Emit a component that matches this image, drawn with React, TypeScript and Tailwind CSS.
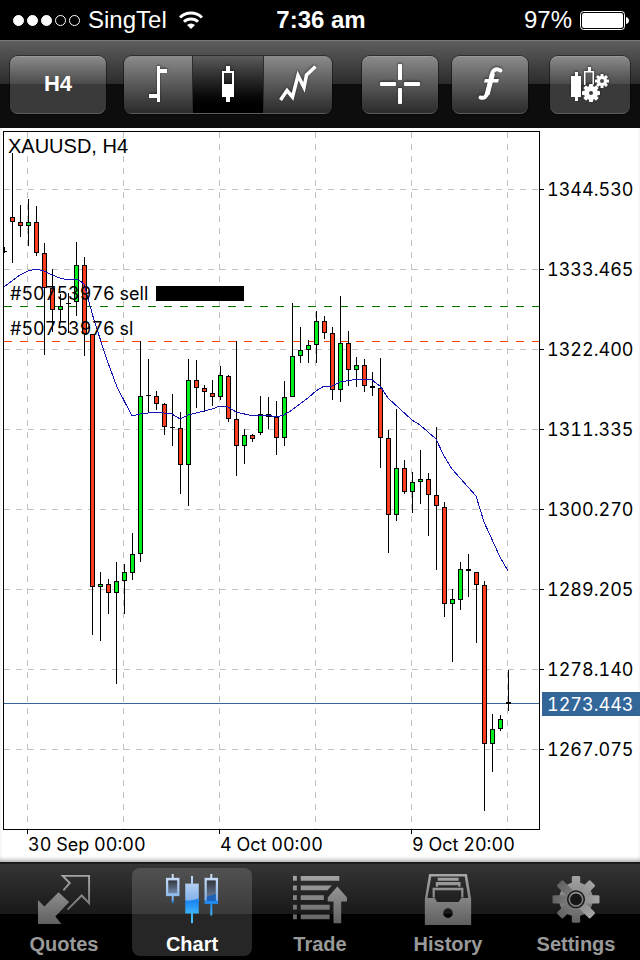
import { useState } from 'react';
import type { ReactNode } from 'react';
import clsx from 'clsx';

// x, high, body top, body bottom, low, direction (u = up, d = down, n = doji)
type Candle = [number, number, number, number, number, 'u' | 'd' | 'n'];

const candles: Candle[] = [
  [12, 153, 217, 222, 263, 'd'],
  [20, 205, 222, 226, 237, 'd'],
  [28, 199, 222, 226, 246, 'u'],
  [36, 206, 222, 253, 256, 'd'],
  [44, 243, 253, 288, 355, 'd'],
  [52, 269, 288, 310, 332, 'd'],
  [60, 294, 306, 310, 322, 'u'],
  [68, 293, 303, 304, 333, 'n'],
  [76, 242, 265, 302, 316, 'u'],
  [84, 257, 265, 334, 356, 'd'],
  [92, 334, 334, 587, 635, 'd'],
  [100, 572, 584, 587, 641, 'u'],
  [108, 579, 584, 593, 614, 'd'],
  [116, 562, 581, 593, 684, 'u'],
  [124, 564, 572, 581, 614, 'u'],
  [132, 533, 554, 573, 580, 'u'],
  [140, 341, 396, 554, 562, 'u'],
  [148, 359, 395, 396, 412, 'n'],
  [156, 391, 396, 404, 410, 'd'],
  [164, 403, 404, 427, 435, 'd'],
  [172, 394, 427, 428, 446, 'n'],
  [180, 412, 428, 465, 494, 'd'],
  [188, 359, 380, 465, 506, 'u'],
  [196, 360, 380, 388, 408, 'd'],
  [204, 385, 388, 392, 412, 'd'],
  [212, 380, 393, 397, 406, 'd'],
  [220, 366, 375, 397, 400, 'u'],
  [228, 375, 376, 419, 422, 'd'],
  [236, 341, 419, 446, 476, 'd'],
  [244, 429, 435, 446, 464, 'u'],
  [252, 434, 435, 439, 442, 'd'],
  [260, 396, 414, 433, 435, 'u'],
  [268, 397, 414, 417, 429, 'n'],
  [276, 401, 417, 438, 455, 'd'],
  [284, 381, 397, 438, 446, 'u'],
  [292, 303, 356, 397, 397, 'u'],
  [300, 327, 350, 356, 363, 'u'],
  [308, 340, 345, 350, 363, 'u'],
  [316, 311, 321, 345, 363, 'u'],
  [324, 316, 321, 333, 339, 'd'],
  [332, 327, 333, 390, 400, 'd'],
  [340, 296, 343, 390, 402, 'u'],
  [348, 331, 343, 370, 386, 'd'],
  [356, 357, 365, 370, 387, 'u'],
  [364, 359, 365, 386, 392, 'd'],
  [372, 372, 386, 388, 396, 'n'],
  [380, 358, 388, 438, 468, 'd'],
  [388, 430, 438, 515, 553, 'd'],
  [396, 409, 468, 515, 521, 'u'],
  [404, 460, 468, 492, 494, 'd'],
  [412, 472, 482, 492, 513, 'u'],
  [420, 450, 479, 482, 504, 'u'],
  [428, 473, 479, 495, 536, 'd'],
  [436, 427, 495, 506, 570, 'd'],
  [444, 502, 507, 604, 617, 'd'],
  [452, 589, 599, 604, 662, 'u'],
  [460, 562, 569, 600, 610, 'u'],
  [468, 554, 569, 571, 597, 'n'],
  [476, 572, 572, 585, 643, 'd'],
  [484, 581, 585, 744, 811, 'd'],
  [492, 714, 729, 744, 772, 'u'],
  [500, 715, 719, 729, 731, 'u'],
  [508, 670, 702, 704, 711, 'n'],
];

const movingAverage =
  '4,287 12,281 20,275 28,271 36,269 44,271 52,275 60,278 68,280 76,279 80,281 84,284 94,320 107,360 117,387 132,416 140,414 156,412 172,414 180,419 188,415 204,411 212,409 220,406 228,407 236,412 253,416 267,415 276,417 284,415 292,410 308,398 316,391 324,386 332,386 340,382 358,379 372,380 380,386 388,398 412,420 420,425 436,439 444,456 452,469 476,496 484,522 500,557 508,571';

const prices = [
  { y: 189, label: '1344.530' },
  { y: 269, label: '1333.465' },
  { y: 349, label: '1322.400' },
  { y: 429, label: '1311.335' },
  { y: 509, label: '1300.270' },
  { y: 589, label: '1289.205' },
  { y: 669, label: '1278.140' },
  { y: 749, label: '1267.075' },
];

const times = [
  { x: 27, label: '30 Sep 00:00' },
  { x: 219, label: '4 Oct 00:00' },
  { x: 411, label: '9 Oct 20:00' },
];

const gridX = [27, 123, 219, 315, 411, 507];

const bodyColor = { u: '#00f01e', d: '#ff3c1e', n: '#000' };

const Gear = ({ cx, cy, r, body, tooth }: { cx: number; cy: number; r: number; body: number; tooth: number }) => (
  <g>
    <circle cx={cx} cy={cy} r={body} />
    {[0, 45, 90, 135].map(a => (
      <rect key={a} x={cx - tooth / 2} y={cy - r} width={tooth} height={r * 2} rx={tooth / 6} transform={`rotate(${a} ${cx} ${cy})`} />
    ))}
  </g>
);

const PriceChart = () => (
  <svg viewBox="0 128 640 734" className="block w-full h-auto" role="img" aria-label="XAUUSD, H4">
    <g shapeRendering="crispEdges" fill="none">
      <g stroke="#c3c3c3" strokeDasharray="6 6">
        {prices.map(p => (
          <line key={p.y} x1="4" x2="539" y1={p.y + 0.5} y2={p.y + 0.5} />
        ))}
        {gridX.map(x => (
          <line key={x} x1={x + 0.5} x2={x + 0.5} y1="132" y2="829" />
        ))}
      </g>
      <g strokeDasharray="8 8">
        <line x1="4" x2="539" y1="306.5" y2="306.5" stroke="#008000" />
        <line x1="4" x2="539" y1="341.5" y2="341.5" stroke="#ff4500" />
      </g>
      <line x1="4" x2="539" y1="703.5" y2="703.5" stroke="#336699" />

      <path d="M4.5 247v6M4 251.5h3" stroke="#000" />
      {candles.map(([x, high, top, bottom, low, dir]) => (
        <g key={x} stroke="#000">
          <line x1={x + 0.5} x2={x + 0.5} y1={high} y2={low} />
          {dir === 'n' ? (
            <rect x={x - 2} y={top} width="5" height={bottom - top} fill="#000" stroke="none" />
          ) : (
            <rect x={x - 1.5} y={top + 0.5} width="4" height={bottom - top - 1} fill={bodyColor[dir]} />
          )}
        </g>
      ))}
      <polyline points={movingAverage} stroke="#1414b4" />

      <rect x="3.5" y="131.5" width="536" height="698" stroke="#000" />
      {prices.map(p => (
        <line key={p.y} x1="540" x2="544" y1={p.y + 0.5} y2={p.y + 0.5} stroke="#000" />
      ))}
      {times.map(t => (
        <line key={t.x} x1={t.x + 0.5} x2={t.x + 0.5} y1="830" y2="834" stroke="#000" />
      ))}
      <rect x="156" y="286" width="88" height="15" fill="#000" />
      <rect x="542" y="692" width="98" height="24" fill="#336699" />
    </g>

    <text x="8" y="153" className="text-[20px]">XAUUSD, H4</text>
    <g className="font-[Inter,sans-serif] text-[18px] tabular-nums">
      <text x="10" y="300">#50753976 sell</text>
      <text x="10" y="335">#50753976 sl</text>
      {prices.map(p => (
        <text key={p.y} x="547" y={p.y + 7}>{p.label}</text>
      ))}
      <text x="547" y="711" fill="#fff">1273.443</text>
      {times.map(t => (
        <text key={t.x} x={t.x + 1} y="851">{t.label}</text>
      ))}
    </g>
  </svg>
);

const ToolIcon = ({ children }: { children: ReactNode }) => (
  <svg viewBox="0 0 40 40" className="w-10 h-10 drop-shadow-[0_-1px_1px_rgba(0,0,0,0.5)]" fill="#fff" aria-hidden="true">
    {children}
  </svg>
);

const chartTypes = [
  {
    name: 'Bars',
    width: 'w-[68px]',
    icon: <path d="M19 2h3v3h7v4h-7v29h-3v-4h-8v-4h8z" />,
  },
  {
    name: 'Candles',
    width: 'w-[72px]',
    icon: <path fillRule="evenodd" d="M18 2h4v5h4v26h-4v5h-4v-5h-4V7h4zM16 9v11h8V9z" />,
  },
  {
    name: 'Line',
    width: 'w-[68px]',
    icon: <path d="M2.5 36 9 26.500l5.500 6.500L20 11.500l6 12L28.500 11 37.500 2.500" fill="none" stroke="#fff" strokeWidth="3.500" />,
  },
];

const button =
  'h-[58px] rounded-lg flex items-center justify-center text-white ring-1 ring-black/40 border-b border-[#5c5c5c] shadow-[inset_0_1px_0_rgba(255,255,255,0.12)]';
const glossy = 'bg-linear-to-b from-[#8c8c8c] to-[#2b2b2b]';
const twoTone = 'bg-linear-to-b from-[#8c8c8c] from-0% via-[#4a4a4a] via-50% to-[#3a3a3a] to-50%';

const Toolbar = () => {
  const [chartType, setChartType] = useState('Candles');

  return (
    <div className="h-[88px] px-[10px] flex items-center justify-between border-t border-[#7a7a7a] bg-linear-to-b from-[#5e5e5e] from-0% via-[#2b2b2b] via-50% to-[#0d0d0d] to-50%">
      <div className="flex gap-[18px]">
        <button type="button" className={clsx(button, twoTone, 'w-24 pb-0.5 text-[22px] font-bold')}>H4</button>
        <div className="h-[58px] flex rounded-lg overflow-hidden ring-1 ring-black/40 border-b border-[#5c5c5c]" role="group" aria-label="Chart type">
          {chartTypes.map(t => (
            <button
              key={t.name}
              type="button"
              aria-label={t.name}
              aria-pressed={chartType === t.name}
              onClick={() => setChartType(t.name)}
              className={clsx(
                'flex items-center justify-center bg-linear-to-b',
                t.width,
                chartType === t.name ? 'from-[#5c5c5c] to-black border-x border-[#2b2b2b]' : 'from-[#8c8c8c] to-[#2b2b2b]'
              )}
            >
              <ToolIcon>{t.icon}</ToolIcon>
            </button>
          ))}
        </div>
      </div>

      <div className="flex gap-[22px]">
        <div className="flex gap-[14px]">
          <button type="button" aria-label="Crosshair" className={clsx(button, glossy, 'w-[76px]')}>
            <ToolIcon>
              <rect x="18" y="0" width="4" height="16" rx="1" />
              <rect x="18" y="24" width="4" height="16" rx="1" />
              <rect x="0" y="18" width="16" height="4" rx="1" />
              <rect x="24" y="18" width="16" height="4" rx="1" />
            </ToolIcon>
          </button>
          <button type="button" aria-label="Indicators" className={clsx(button, glossy, 'w-[76px]')}>
            <ToolIcon>
              <path d="M30.500 6.500C26.500 4 23 5.500 22 10l-4.500 18.500c-1 4.500-3.500 6-7 5" fill="none" stroke="#fff" strokeWidth="4" strokeLinecap="round" />
              <path d="M20 10h5l-5.500 21h-5zM15 15H29l-1 3.500H14z" />
            </ToolIcon>
          </button>
        </div>
        <button type="button" aria-label="Chart settings" className={clsx(button, twoTone, 'w-20')}>
          <ToolIcon>
            <path d="M5 8h3v4h3v21H8v4H5v-4H1V12h4z" />
            <path fillRule="evenodd" d="M18 3h3v4h3v14H14V7h4zM15.500 8.500V21h7V8.500z" />
            <circle cx="21" cy="29" r="9" fill="#444" />
            <Gear cx={21} cy={29} r={9} body={7} tooth={4} />
            <circle cx="21" cy="29" r="2" fill="#3c3c3c" />
            <Gear cx={32} cy={17} r={7} body={5} tooth={3} />
            <circle cx="32" cy="17" r="2" fill="#4a4a4a" />
          </ToolIcon>
        </button>
      </div>
    </div>
  );
};

const StatusBar = () => (
  <header className="h-10 grid grid-cols-[1fr_auto_1fr] items-center pl-[13px] pr-[11px] bg-black text-white text-[24px]">
    <div className="flex items-center">
      <div className="flex gap-[3px] mr-2">
        {[1, 2, 3, 4, 5].map(n => (
          <span key={n} className={clsx('w-[11px] h-[11px] rounded-full border border-white', n <= 3 && 'bg-white')} />
        ))}
      </div>
      <span>SingTel</span>
      <svg viewBox="0 0 24 18" className="w-6 h-[18px] ml-3" fill="none" stroke="#fff" strokeWidth="3" aria-hidden="true">
        <path d="M1 6.500a15.500 15.500 0 0 1 22 0M5 10.800a10 10 0 0 1 14 0" />
        <path d="M12 18 8 14a6 6 0 0 1 8 0z" fill="#fff" stroke="none" />
      </svg>
    </div>
    <span className="font-bold">7:36 am</span>
    <div className="flex items-center justify-end gap-2">
      <span>97%</span>
      <svg viewBox="0 0 49 19" className="w-[49px] h-[19px]" aria-hidden="true">
        <rect x="0.500" y="0.500" width="44" height="18" rx="3" fill="none" stroke="#fff" />
        <rect x="2" y="2" width="41" height="15" rx="2" fill="#fff" />
        <path d="M46 6c4 1 4 6 0 7z" fill="#fff" />
      </svg>
    </div>
  </header>
);

const QuotesIcon = () => (
  <>
    <path d="M3 84 23 104 67 60 100 90 57 135 76 159H3z" />
    <path d="M82 54 102 31 80 9H162V94L139 70 95 114" fill="none" stroke="url(#gray)" strokeWidth="6" />
  </>
);

const ChartIcon = () => (
  <g fill="url(#blue)">
    <rect x="21" y="3" width="6" height="14" />
    <rect x="21" y="70" width="6" height="23" />
    <rect x="3" y="15" width="42" height="57" />
    <rect x="10" y="23" width="28" height="40" fill="url(#well)" />
    <rect x="81" y="9" width="6" height="147" />
    <rect x="63" y="33" width="42" height="93" />
    <rect x="141" y="3" width="6" height="14" />
    <rect x="141" y="94" width="6" height="38" />
    <rect x="123" y="15" width="42" height="81" />
    <rect x="130" y="23" width="28" height="64" fill="url(#well)" />
    <path d="M130 73 158 65V87H130z" fill="#1c62b8" />
    <path d="M63 91 105 79V92H63z" fill="#1d86f2" />
  </g>
);

const TradeIcon = () => (
  <>
    {[9, 39, 69, 99, 129].map(y => (
      <rect key={y} x="0" y={y} width="12" height="15" />
    ))}
    <path d="M24 9H144V24H24zM24 39H121L107 54H24zM24 69H96V84H24zM24 99H114V114H24zM24 129H114V144H24z" />
    <path d="M138 42 168 76V89H150V156H126V89H108V76z" />
  </>
);

const HistoryIcon = () => (
  <>
    <path
      fillRule="evenodd"
      d="M25 3H143L156 81V162H12V81zM32 11 20 78H43L50 90H117L125 78H147L136 11zM99 125a15 15 0 1 0-30 0 15 15 0 1 0 30 0z"
    />
    <path d="M52 15H117V24H52zM46 28H123V43H116V38H53V43H46zM36 46H132V76H125V54H43V76H36z" />
  </>
);

const SettingsIcon = () => (
  <>
    <Gear cx={84} cy={82} r={73} body={53} tooth={26} />
    <circle cx="84" cy="82" r="28" fill="#151515" />
    <circle cx="84" cy="82" r="21" fill="#151515" stroke="url(#gray)" strokeWidth="5" />
  </>
);

const tabs = [
  { name: 'Quotes', icon: <QuotesIcon /> },
  { name: 'Chart', icon: <ChartIcon /> },
  { name: 'Trade', icon: <TradeIcon /> },
  { name: 'History', icon: <HistoryIcon /> },
  { name: 'Settings', icon: <SettingsIcon /> },
];

// shared by the tab icons; must stay rendered or the gradients vanish
const IconGradients = () => (
  <svg className="w-0 h-0" aria-hidden="true">
    <defs>
      <linearGradient id="gray" gradientUnits="userSpaceOnUse" x1="0" y1="0" x2="0" y2="168">
        <stop offset="0" stopColor="#a8a8a8" />
        <stop offset="1" stopColor="#5c5c5c" />
      </linearGradient>
      <linearGradient id="blue" gradientUnits="userSpaceOnUse" x1="0" y1="0" x2="0" y2="168">
        <stop offset="0" stopColor="#d3e4f8" />
        <stop offset="0.5" stopColor="#84b1ea" />
        <stop offset="0.52" stopColor="#1d86f2" />
        <stop offset="0.8" stopColor="#42bdff" />
        <stop offset="1" stopColor="#5fd0ff" />
      </linearGradient>
      <linearGradient id="well" x1="0" y1="0" x2="0" y2="1">
        <stop offset="0" stopColor="#33373d" />
        <stop offset="1" stopColor="#7187a8" />
      </linearGradient>
    </defs>
  </svg>
);

const TabBar = () => (
  <nav className="h-[98px] flex border-t-2 border-[#1c1c1c] bg-linear-to-b from-[#353535] from-0% via-[#191919] via-52% to-black to-52%">
    <IconGradients />
    {tabs.map(({ name, icon }) => {
      const active = name === 'Chart';
      return (
        <a
          key={name}
          href={`#${name.toLowerCase()}`}
          aria-current={active ? 'page' : undefined}
          className={clsx(
            'flex-1 mx-1 my-1 pt-[5px] rounded-lg flex flex-col items-center text-[20px] leading-6 font-bold',
            active ? 'bg-white/15 text-white' : 'text-[#999]'
          )}
        >
          <svg viewBox="0 0 168 168" className="w-14 h-14" fill="url(#gray)" aria-hidden="true">{icon}</svg>
          <span className="mt-[5px]">{name}</span>
        </a>
      );
    })}
  </nav>
);

const App = () => (
  <div className="min-h-screen flex flex-col bg-white text-black font-['Liberation_Sans',Arial,sans-serif]">
    <StatusBar />
    <Toolbar />
    <main className="flex-1 shadow-[inset_0_-4px_4px_-2px_rgba(0,0,0,0.35)]">
      <PriceChart />
    </main>
    <TabBar />
  </div>
);

export default App;
